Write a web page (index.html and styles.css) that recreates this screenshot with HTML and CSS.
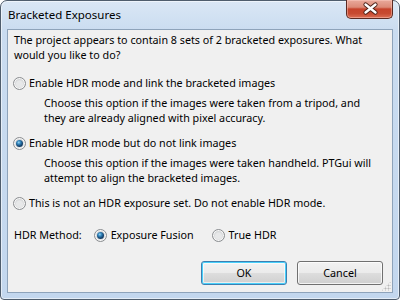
FILE: index.html
```html
<!DOCTYPE html>
<html>
<head>
<meta charset="utf-8">
<link rel="stylesheet" href="styles.css">
</head>
<body>
<div class="window">
  <div class="titlebar">
    <span class="title">Bracketed Exposures</span>
    <div class="close">
      <svg width="47" height="19" viewBox="0 0 47 19">
        <path d="M18.5 5.5 L28.5 13.5 M28.5 5.5 L18.5 13.5" stroke="#4a1f16" stroke-width="4.2" stroke-linecap="round" fill="none"/>
        <path d="M18.5 5.5 L28.5 13.5 M28.5 5.5 L18.5 13.5" stroke="#ffffff" stroke-width="2.4" stroke-linecap="round" fill="none"/>
      </svg>
    </div>
  </div>
  <div class="client">
    <p class="intro">The project appears to contain 8 sets of 2 bracketed exposures. What<br>would you like to do?</p>

    <div class="option first">
      <span class="radio"></span>
      <span class="label">Enable HDR mode and link the bracketed images</span>
    </div>
    <p class="desc">Choose this option if the images were taken from a tripod, and<br>they are already aligned with pixel accuracy.</p>

    <div class="option second">
      <span class="radio checked"></span>
      <span class="label">Enable HDR mode but do not link images</span>
    </div>
    <p class="desc">Choose this option if the images were taken handheld. PTGui will<br>attempt to align the bracketed images.</p>

    <div class="option third">
      <span class="radio"></span>
      <span class="label">This is not an HDR exposure set. Do not enable HDR mode.</span>
    </div>

    <div class="method">
      <span class="method-label">HDR Method:</span>
      <span class="radio checked"></span>
      <span class="label fusion">Exposure Fusion</span>
      <span class="radio"></span>
      <span class="label">True HDR</span>
    </div>

    <div class="buttons">
      <div class="btn default">OK</div>
      <div class="btn">Cancel</div>
    </div>

    <div class="grip"></div>
  </div>
</div>
</body>
</html>
```
FILE: styles.css
```css
* { box-sizing: border-box; }
html, body {
  margin: 0;
  padding: 0;
  width: 400px;
  height: 300px;
  overflow: hidden;
  background: #ffffff;
}
body {
  font-family: "Noto Sans", "Open Sans", sans-serif;
  font-size: 10.75px;
  color: #000;
}
.window {
  width: 400px;
  height: 300px;
  border: 1px solid #4f5d6d;
  border-radius: 7px 7px 4px 4px;
  background: linear-gradient(#dae7f5 0px, #cadcf0 30px, #c3d7ee 100%);
  box-shadow: inset 0 0 0 1px rgba(255,255,255,0.55);
  display: flex;
  flex-direction: column;
  position: relative;
}
.titlebar {
  height: 28px;
  display: flex;
  align-items: flex-start;
  justify-content: space-between;
  padding-left: 7px;
  padding-right: 6px;
  flex: none;
}
.title {
  font-size: 11.5px;
  line-height: 14px;
  margin-top: 7px;
  color: #000;
}
.close {
  width: 47px;
  height: 19px;
  margin-top: -1px;
  border: 1px solid #5b2a22;
  border-top: none;
  border-radius: 0 0 5px 5px;
  background: linear-gradient(#e9a99b 0%, #dc8a77 40%, #c6432b 50%, #c74a31 75%, #dc6f55 100%);
  box-shadow: inset 0 0 0 1px rgba(255,210,200,0.45);
}
.close svg { display: block; margin-top: -1px; }
.client {
  flex: 1;
  margin: 0 6px 6px 6px;
  border: 1px solid #8ea3ba;
  background: #f0f0f0;
  position: relative;
  padding: 3px 9px 0 6px;
  display: flex;
  flex-direction: column;
  white-space: nowrap;
}
p { margin: 0; }
.intro, .desc, .option, .method {
  line-height: 15px;
}
.option {
  display: flex;
  align-items: center;
  margin-left: -1px;
}
.option .radio { margin-right: 3px; }
.first { margin-top: 13px; }
.second { margin-top: 10px; }
.third { margin-top: 10px; }
.desc {
  margin-top: 5px;
  padding-left: 30px;
}
.radio {
  display: inline-block;
  width: 13px;
  height: 13px;
  border-radius: 50%;
  border: 1px solid #8a8d90;
  background: radial-gradient(circle at 50% 55%, #e7e8e9 0 3px, #d0d2d4 5px, #f3f3f3 6px);
  box-shadow: inset 0 0 0 1px #f8f8f8;
  flex: none;
  position: relative;
}
.radio.checked::after {
  content: "";
  position: absolute;
  left: 2px;
  top: 2px;
  width: 7px;
  height: 7px;
  border-radius: 50%;
  background: radial-gradient(circle at 40% 35%, #9fd7f4 0, #3b8fc4 1.5px, #1d5a8c 3px, #153f66 4px);
}
.method {
  display: flex;
  align-items: center;
  margin-top: 17px;
}
.method-label { margin-right: 12px; }
.method .radio { margin-right: 4px; }
.fusion { margin-right: 18px; }
.buttons {
  display: flex;
  justify-content: flex-end;
  gap: 10px;
  margin-top: 18px;
}
.btn {
  width: 86px;
  height: 24px;
  border: 1px solid #707070;
  border-radius: 3px;
  background: linear-gradient(#f2f2f2 0%, #ebebeb 48%, #dddddd 52%, #cfcfcf 100%);
  box-shadow: inset 0 0 0 1px rgba(255,255,255,0.75);
  display: flex;
  align-items: center;
  justify-content: center;
  line-height: 15px;
}
.btn.default {
  border-color: #3c7fb1;
  box-shadow: inset 0 0 0 1px #48d0fb, inset 0 0 0 2px rgba(255,255,255,0.6);
}
.grip {
  position: absolute;
  right: 1px;
  bottom: 1px;
  width: 10px;
  height: 10px;
  background:
    radial-gradient(circle, #b9b9b9 0.9px, transparent 1.1px) 0 0 / 3px 3px;
  clip-path: polygon(100% 0, 100% 100%, 0 100%);
}
```
